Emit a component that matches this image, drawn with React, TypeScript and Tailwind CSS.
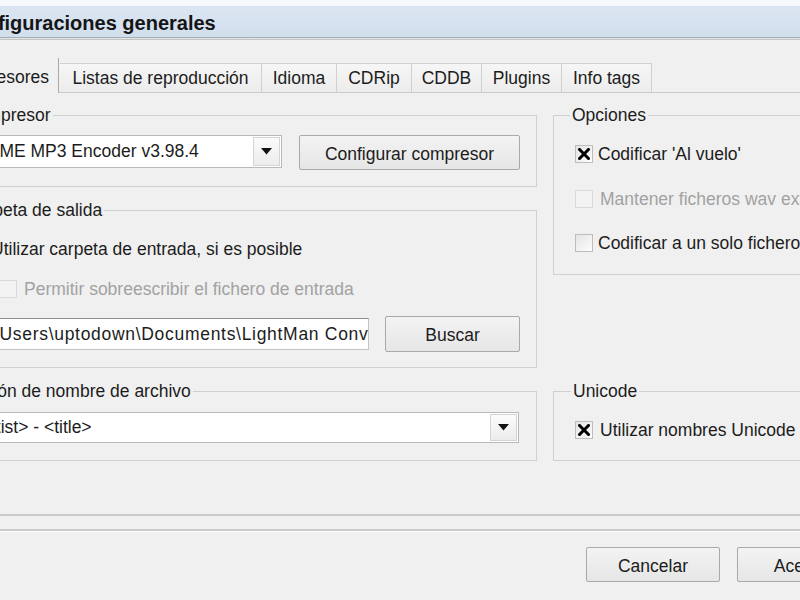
import React from "react";

const TABS = [
  { label: "Listas de reproducción", w: "w-[202px]" },
  { label: "Idioma", w: "w-[75px]" },
  { label: "CDRip", w: "w-[75px]" },
  { label: "CDDB", w: "w-[70px]" },
  { label: "Plugins", w: "w-[80px]" },
  { label: "Info tags", w: "w-[90px]" },
];

function Arrow() {
  return (
    <svg width="11" height="7" viewBox="0 0 11 7" aria-hidden>
      <polygon points="0,0 11,0 5.5,6.5" fill="#111" />
    </svg>
  );
}

function Check({ checked = false, disabled = false }: { checked?: boolean; disabled?: boolean }) {
  return (
    <span
      className={`flex h-[18px] w-[18px] shrink-0 items-center justify-center border ${
        disabled
          ? "border-[#dadada] bg-[#f3f3f3]"
          : "border-[#bdbdbd] bg-gradient-to-br from-[#e4e4e4] to-[#fdfdfd]"
      }`}
    >
      {checked && (
        <svg width="12" height="12" viewBox="0 0 12 12" aria-hidden>
          <path d="M1.5 1.5 L10.5 10.5 M10.5 1.5 L1.5 10.5" stroke="#000" strokeWidth="3" strokeLinecap="square" />
        </svg>
      )}
    </span>
  );
}

function Combo({ text, className }: { text: string; className: string }) {
  return (
    <div className={`flex border border-[#b9b9b9] bg-white ${className}`}>
      <div className="flex flex-1 items-center overflow-hidden whitespace-nowrap pl-[3px]">{text}</div>
      <div className="my-px mr-px flex w-[27px] items-center justify-center border border-[#d4d4d4] bg-gradient-to-b from-[#fbfbfb] to-[#ececec]">
        <Arrow />
      </div>
    </div>
  );
}

function Button({ label, className }: { label: string; className: string }) {
  return (
    <div
      className={`flex items-center justify-center rounded-[2px] border border-[#a9a9a9] bg-gradient-to-b from-[#f3f3f3] to-[#e6e6e6] pt-[3px] ${className}`}
    >
      {label}
    </div>
  );
}

function Group({
  label,
  labelLeft,
  className,
  children,
}: {
  label: string;
  labelLeft: string;
  className: string;
  children: React.ReactNode;
}) {
  return (
    <div className={`relative border border-[#d0d0d0] ${className}`}>
      <span className={`absolute -top-[11px] whitespace-nowrap bg-[#f0f0f0] px-[2px] leading-[20px] ${labelLeft}`}>
        {label}
      </span>
      {children}
    </div>
  );
}

export default function App() {
  return (
    <div className="h-[600px] w-[800px] overflow-hidden bg-[#f0f0f0] font-['Liberation_Sans',Arial,sans-serif] text-[17.5px] text-[#1c1c1c]">
      <div className="h-[6px] bg-[#f6f8fb]" />
      <div className="flex h-[31px] items-center bg-gradient-to-b from-[#dbe6f2] to-[#d1deec] pt-[2px]">
        <span className="-ml-[41px] whitespace-nowrap text-[20px] font-bold text-[#151515]">
          Configuraciones generales
        </span>
      </div>
      <div className="h-px bg-[#a2acb7]" />
      <div className="h-px bg-[#e6e6e6]" />
      <div className="h-px bg-[#c3c3c3]" />

      <div className="mt-[18px] flex h-[34px] items-end">
        <div className="relative z-10 -mb-px -ml-[64px] flex h-[35px] w-[123px] shrink-0 items-center whitespace-nowrap border-r border-[#a9a9a9] bg-[#f0f0f0] pl-[8px] pt-[4px]">
          Compresores
        </div>
        <div className="ml-px flex">
          {TABS.map((t) => (
            <div
              key={t.label}
              className={`flex h-[29px] shrink-0 items-center justify-center whitespace-nowrap border-r border-t border-[#d0d0d0] bg-gradient-to-b from-[#f6f6f6] to-[#ececec] pt-[1px] ${t.w}`}
            >
              {t.label}
            </div>
          ))}
        </div>
      </div>

      <div className="flex h-[424px] border-b-2 border-t border-[#cbcbcb] pt-[22px]">
        <div className="-ml-[60px] flex w-[597px] shrink-0 flex-col">
          <Group label="Compresor" labelLeft="left-[21px]" className="h-[72px]">
            <div className="flex items-start pt-[19px]">
              <Combo text="LAME MP3 Encoder v3.98.4" className="ml-[33px] h-[33px] w-[308px]" />
              <Button label="Configurar compresor" className="ml-[17px] h-[35px] w-[221px]" />
            </div>
          </Group>

          <Group label="Carpeta de salida" labelLeft="left-[22px]" className="mt-[23px] h-[158px]">
            <div className="ml-[26px] mt-[28px] flex h-[20px] items-center">
              <span className="flex h-[18px] w-[18px] items-center justify-center rounded-full border border-[#9a9a9a] bg-white">
                <span className="h-[8px] w-[8px] rounded-full bg-[#2a62a8]" />
              </span>
              <span className="ml-[6px] whitespace-nowrap">Utilizar carpeta de entrada, si es posible</span>
            </div>
            <div className="ml-[58px] mt-[20px] flex h-[20px] items-center">
              <Check disabled />
              <span className="ml-[7px] whitespace-nowrap text-[#a2a2a2]">
                Permitir sobreescribir el fichero de entrada
              </span>
            </div>
            <div className="mt-[17px] flex items-center">
              <div className="ml-[29px] flex h-[32px] w-[399px] items-center overflow-hidden whitespace-nowrap border border-[#c4c4c4] border-t-[#8e8e8e] bg-white pl-[4px] tracking-[0.7px]">
                C:\Users\uptodown\Documents\LightMan Converter
              </div>
              <Button label="Buscar" className="ml-[16px] h-[36px] w-[135px]" />
            </div>
          </Group>

          <Group label="Formación de nombre de archivo" labelLeft="-left-[9px]" className="mt-[23px] h-[70px]">
            <div className="pt-[20px]">
              <Combo text="<artist> - <title>" className="ml-[25px] h-[31px] w-[553px]" />
            </div>
          </Group>
        </div>

        <div className="ml-[16px] flex w-[300px] shrink-0 flex-col">
          <Group label="Opciones" labelLeft="left-[16px]" className="h-[160px]">
            <div className="ml-[21px] mt-[28px] flex h-[20px] items-center">
              <Check checked />
              <span className="ml-[5px] whitespace-nowrap">Codificar 'Al vuelo'</span>
            </div>
            <div className="ml-[21px] mt-[25px] flex h-[20px] items-center">
              <Check disabled />
              <span className="ml-[7px] whitespace-nowrap text-[#a2a2a2]">Mantener ficheros wav extraídos</span>
            </div>
            <div className="ml-[21px] mt-[24px] flex h-[20px] items-center">
              <Check />
              <span className="ml-[5px] whitespace-nowrap">Codificar a un solo fichero</span>
            </div>
          </Group>

          <Group label="Unicode" labelLeft="left-[17px]" className="mt-[116px] h-[70px]">
            <div className="ml-[21px] mt-[28px] flex h-[20px] items-center">
              <Check checked />
              <span className="ml-[7px] whitespace-nowrap">Utilizar nombres Unicode</span>
            </div>
          </Group>
        </div>
      </div>

      <div className="mt-[13px] h-[2px] bg-[#c9c9c9]" />
      <div className="h-px bg-white" />

      <div className="mt-[15px] flex">
        <Button label="Cancelar" className="ml-[586px] h-[35px] w-[134px] shrink-0" />
        <Button label="Aceptar" className="ml-[17px] h-[35px] w-[134px] shrink-0" />
      </div>
    </div>
  );
}
